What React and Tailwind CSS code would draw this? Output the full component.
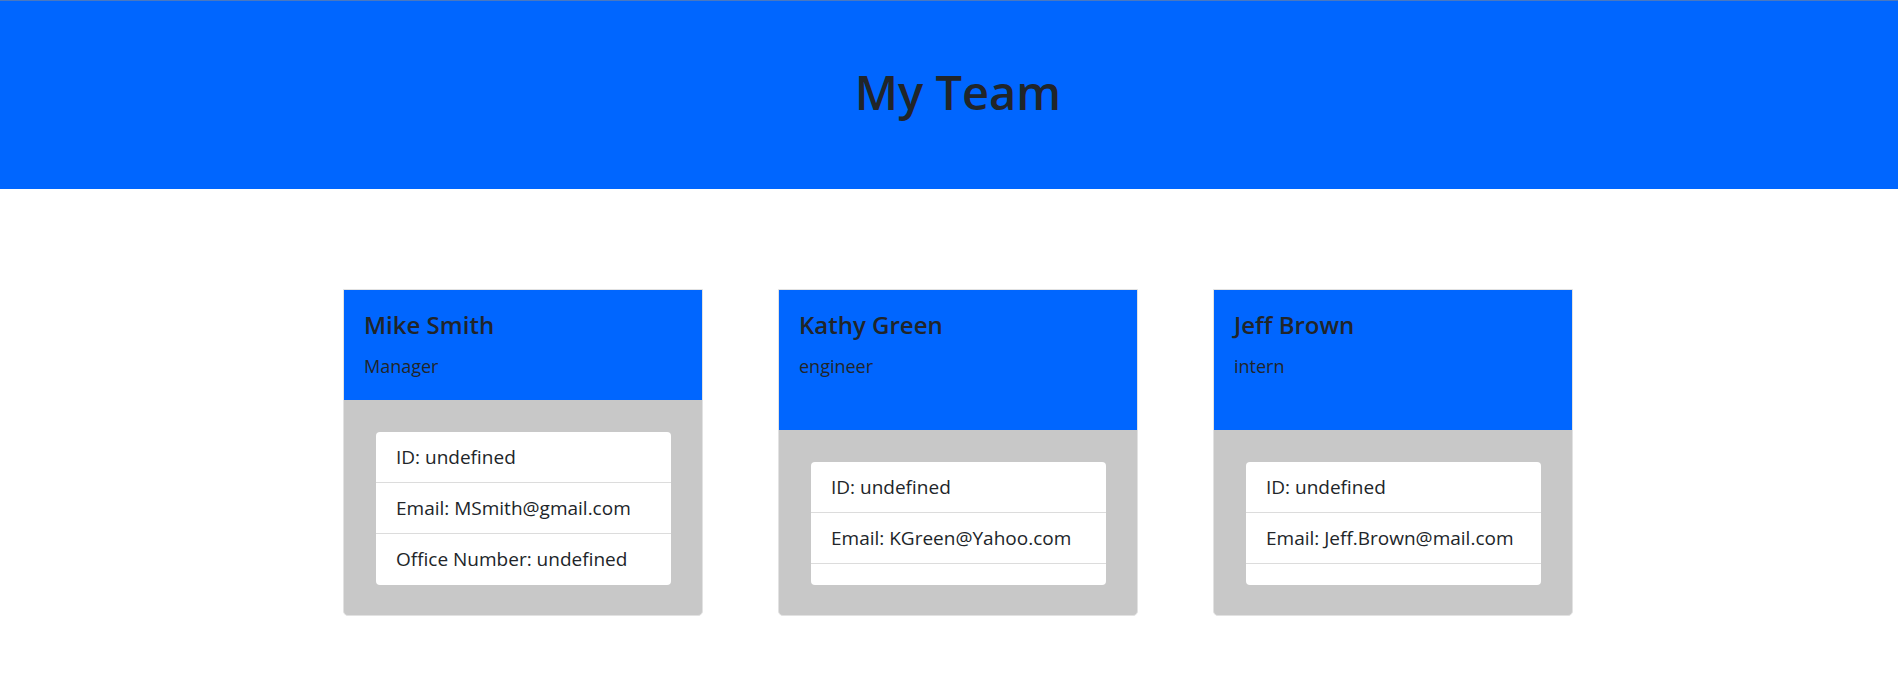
const TEAM = [
  {
    name: 'Mike Smith',
    role: 'Manager',
    tall: false,
    rows: ['ID: undefined', 'Email: MSmith@gmail.com', 'Office Number: undefined'],
  },
  {
    name: 'Kathy Green',
    role: 'engineer',
    tall: true,
    rows: ['ID: undefined', 'Email: KGreen@Yahoo.com', ''],
  },
  {
    name: 'Jeff Brown',
    role: 'intern',
    tall: true,
    rows: ['ID: undefined', 'Email: Jeff.Brown@mail.com', ''],
  },
];

function MemberCard({ member }) {
  return (
    <div className="w-[360px] h-[327px] flex flex-col border border-[#e2e2e2] rounded-b-[5px] overflow-hidden bg-[#c8c8c8]">
      {/* Header */}
      <div
        className={[
          'bg-[#0066ff] px-[20px] pt-[20px] shrink-0',
          member.tall ? 'h-[140px]' : 'h-[110px]',
        ].join(' ')}
      >
        <h2 className="text-[24px] leading-[29px] font-semibold text-[#212529]">{member.name}</h2>
        <p className="text-[18px] leading-[27px] text-[#212529] mt-[14px]">{member.role}</p>
      </div>

      {/* Body */}
      <div className="flex-1 flex flex-col pt-[32px] pb-[30px] pl-[32px] pr-[31px] min-h-0">
        <ul className="flex-1 min-h-0 overflow-hidden bg-white rounded-[4px]">
          {member.rows.map((row, i) => (
            <li
              key={i}
              className="px-[20px] py-[12px] h-[51px] text-[19px] leading-[27px] text-[#212529] border-b border-[#dcdcdc] last:border-b-0"
            >
              {row}
            </li>
          ))}
        </ul>
      </div>
    </div>
  );
}

export default function App() {
  return (
    <div className="min-h-screen bg-white" style={{ fontFamily: '"Open Sans", "Noto Sans", sans-serif' }}>
      {/* Banner */}
      <header className="h-[189px] bg-[#0066ff] border-t border-[#4a78c0] flex items-center justify-center pl-[18px] pb-[6px]">
        <h1 className="text-[47px] font-semibold text-[#212529] leading-none">My Team</h1>
      </header>

      {/* Cards */}
      <main className="flex gap-[75px] pl-[343px] pt-[100px]">
        {TEAM.map((m) => (
          <MemberCard key={m.name} member={m} />
        ))}
      </main>
    </div>
  );
}
